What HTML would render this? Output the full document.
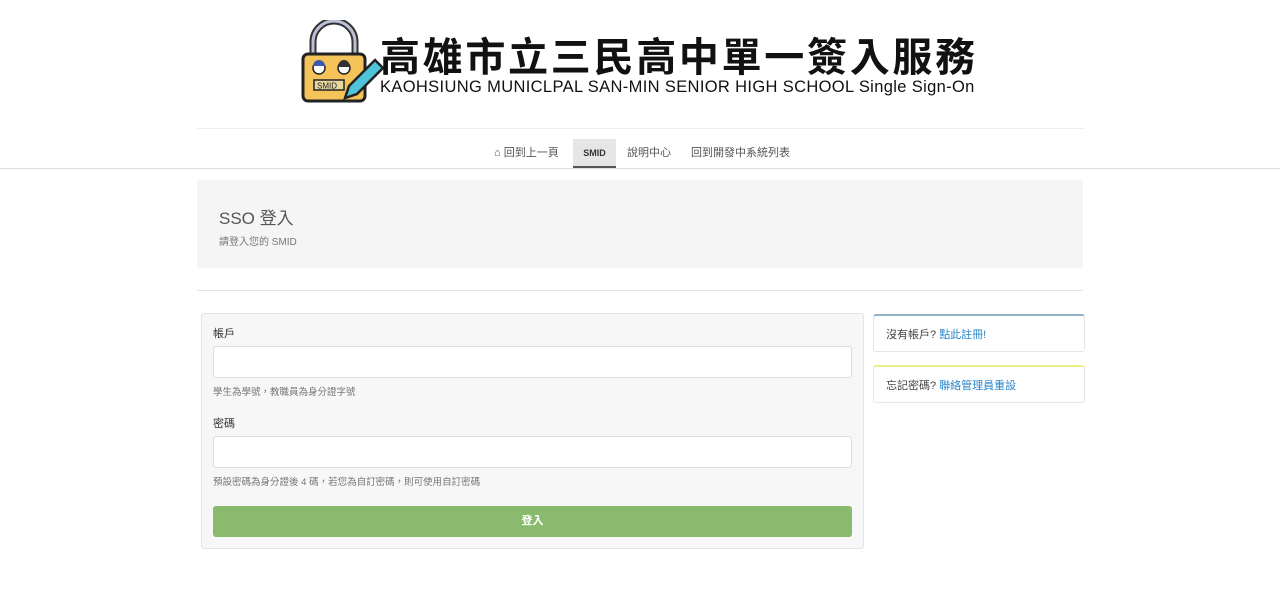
<!DOCTYPE html>
<html><head><meta charset="utf-8"><style>
body{margin:0;background:#fff;font-family:"Liberation Sans","Noto Sans CJK TC",sans-serif;color:#333;font-size:12px;width:1280px;height:607px;overflow:hidden;position:relative}
.a{position:absolute}
.hdr{left:197px;top:0;width:887px;height:128px;border-bottom:1px solid #eee}
.zh{left:380px;top:26px;font-size:40px;font-weight:bold;color:#111;letter-spacing:2.7px;white-space:nowrap;font-family:"Noto Sans CJK TC",sans-serif;line-height:56px}
.en{left:380px;top:78px;font-size:16.5px;letter-spacing:0.35px;color:#111;white-space:nowrap;font-family:"Liberation Sans",sans-serif}
.nav{top:139px;left:0;width:1280px;height:29px;border-bottom:1px solid #ddd}
.nav span{position:absolute;top:0;line-height:29px;font-size:11px;color:#555}
.jumbo{left:197px;top:180px;width:886px;height:88px;background:#f5f5f5}
.panel{left:201px;top:313px;width:661px;height:234px;background:#f7f7f7;border:1px solid #e3e3e3;border-radius:3px}
.inp{position:absolute;left:11px;width:637px;height:30px;background:#fff;border:1px solid #ddd;border-radius:3px}
.lbl{position:absolute;left:11px;font-size:11px;color:#333}
.help{position:absolute;left:11px;font-size:9.5px;color:#777}
.btn{position:absolute;left:11px;top:192px;width:639px;height:31px;background:#8aba6e;border-radius:3px;color:#fff;font-size:11px;text-align:center;line-height:31px;font-weight:bold}
.side{left:873px;width:212px;height:38px;background:#fff;border:1px solid #e6e6e6;border-radius:3px;font-size:11px;line-height:38px;box-sizing:border-box;padding-left:12px;color:#444}
.side b{font-weight:normal;color:#2a86c9}
</style></head><body>
<div class="a hdr"></div>
<svg class="a" style="left:300px;top:20px" width="84" height="86" viewBox="0 0 84 86">
<path d="M13 36V22a21 21 0 0 1 42 0v14" fill="none" stroke="#333" stroke-width="7"/>
<path d="M13 36V22a21 21 0 0 1 42 0v14" fill="none" stroke="#bcc0d6" stroke-width="3"/>
<rect x="3" y="34" width="62" height="47" rx="5" fill="#f4c35a" stroke="#222" stroke-width="3"/>
<circle cx="19" cy="48" r="6" fill="#fff" stroke="#222" stroke-width="1.5"/><path d="M13 46a6 6 0 0 1 12 0z" fill="#3a5bb0"/>
<circle cx="44" cy="48" r="6" fill="#fff" stroke="#222" stroke-width="1.5"/><path d="M38 47a6 7 0 0 1 12 0z" fill="#333"/>
<rect x="14" y="60" width="30" height="10" fill="#e9d7a0" stroke="#222" stroke-width="1.5"/>
<text x="17" y="68.5" font-size="8" font-family="Liberation Sans" fill="#222">SMID</text>
<path d="M45 78l4-12 26-26 8 8-26 26z" fill="#4fc3d9" stroke="#222" stroke-width="2.5"/>
</svg>
<div class="a zh">高雄市立三民高中單一簽入服務</div>
<div class="a en">KAOHSIUNG MUNICLPAL SAN-MIN SENIOR HIGH SCHOOL Single Sign-On</div>
<div class="a nav">
<span style="left:494px">&#8962; 回到上一頁</span>
<span style="left:573px;width:43px;background:#e6e6e6;text-align:center;font-weight:bold;font-size:9px;color:#333;border-bottom:2px solid #555;height:27px;line-height:29px">SMID</span>
<span style="left:627px">說明中心</span>
<span style="left:691px">回到開發中系統列表</span>
</div>
<div class="a jumbo">
<div class="a" style="left:22px;top:24px;font-size:17px;color:#555">SSO 登入</div>
<div class="a" style="left:22px;top:53px;font-size:10px;color:#777">請登入您的 SMID</div>
</div>
<div class="a" style="left:197px;top:290px;width:886px;border-top:1px solid #e5e5e5"></div>
<div class="a panel">
<div class="lbl" style="top:11px">帳戶</div>
<div class="inp" style="top:32px"></div>
<div class="help" style="top:70px">學生為學號，教職員為身分證字號</div>
<div class="lbl" style="top:101px">密碼</div>
<div class="inp" style="top:122px"></div>
<div class="help" style="top:160px">預設密碼為身分證後 4 碼，若您為自訂密碼，則可使用自訂密碼</div>
<div class="btn">登入</div>
</div>
<div class="a side" style="top:314px;border-top:2px solid #8fb2c4">沒有帳戶? <b>點此註冊!</b></div>
<div class="a side" style="top:365px;border-top:2px solid #eeee88">忘記密碼? <b>聯絡管理員重設</b></div>
</body></html>
